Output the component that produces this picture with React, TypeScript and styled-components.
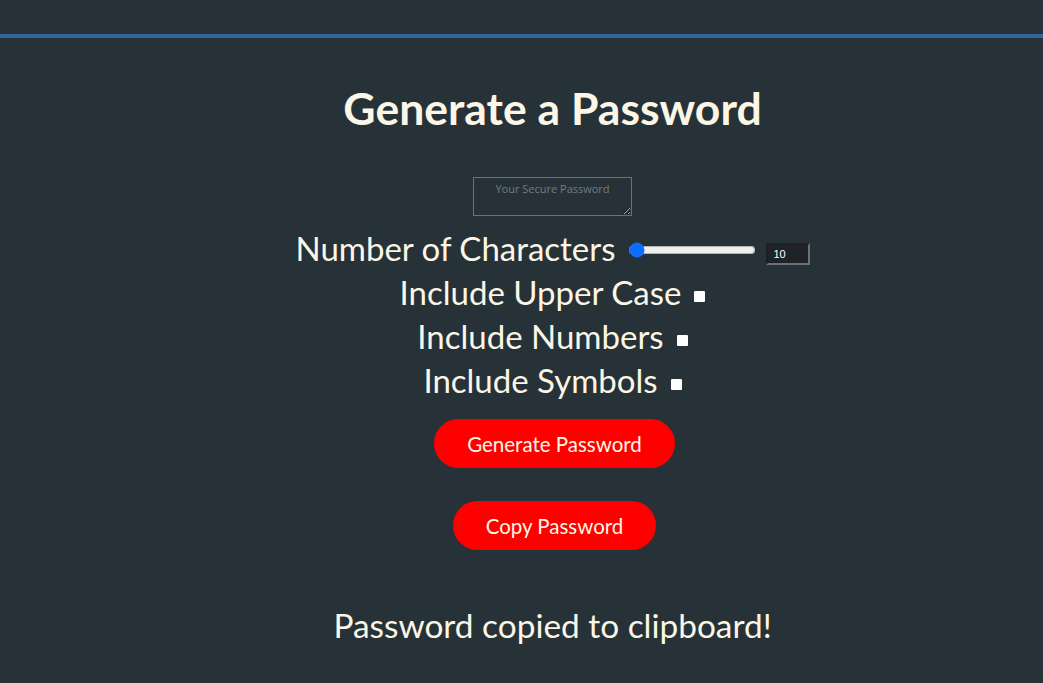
import React from "react";
import styled, { createGlobalStyle } from "styled-components";

const Global = createGlobalStyle`
  html, body { margin: 0; padding: 0; background: #263238; }
  body { font-family: Lato, "Open Sans", sans-serif; color: #fbf6e6; }
`;

const Page = styled.div`
  min-height: 683px;
  background: #263238;
  padding-top: 34px;
  box-sizing: border-box;
`;

const TopBar = styled.div`
  height: 4px;
  background: #2f6599;
`;

const Main = styled.main`
  display: flex;
  flex-direction: column;
  align-items: center;
  padding-left: 62px;
`;

const Title = styled.h1`
  margin: 44px 0 0;
  font-size: 44.5px;
  font-weight: 700;
  line-height: 52px;
  color: #fbf6e6;
`;

const Output = styled.textarea`
  margin-top: 43px;
  width: 159px;
  height: 39px;
  box-sizing: border-box;
  background: transparent;
  border: 1px solid #6c7175;
  color: #fbf6e6;
  font-family: "Open Sans", sans-serif;
  font-size: 11px;
  text-align: center;
  padding: 3px 2px;
  resize: both;
  &::placeholder { color: #777b7d; }
`;

const Rows = styled.div`
  margin-top: 10px;
  display: flex;
  flex-direction: column;
  align-items: center;
`;

const Row = styled.div`
  display: flex;
  align-items: center;
  height: 44px;
  font-size: 33px;
`;

const Label = styled.label`
  white-space: nowrap;
`;

const Range = styled.input`
  width: 128px;
  margin: 4px 10px 0 12px;
  accent-color: #0d6efd;
`;

const NumberBox = styled.input`
  width: 44px;
  height: 22px;
  box-sizing: border-box;
  margin-top: 12px;
  background: #1f2328;
  border: 2px inset #6c7175;
  color: #ffffff;
  font-size: 11px;
  padding: 2px 6px;
`;

const Check = styled.span`
  display: inline-block;
  width: 11px;
  height: 11px;
  background: #fff;
  border-radius: 1px;
  margin: 8px 0 0 13px;
`;

const Button = styled.button<{ $w: number; $mt: number }>`
  width: ${(p) => p.$w}px;
  height: 49px;
  margin-top: ${(p) => p.$mt}px;
  margin-left: 4px;
  border: none;
  border-radius: 25px;
  background: #ff0000;
  color: #fbf6e6;
  font-family: Lato, sans-serif;
  font-size: 20.5px;
`;

const Message = styled.p`
  margin: 55px 0 0;
  font-size: 33.4px;
  line-height: 40px;
`;

export default function App() {
  return (
    <>
      <Global />
      <Page>
        <TopBar />
        <Main>
          <Title>Generate a Password</Title>
          <Output placeholder="Your Secure Password" />
          <Rows>
            <Row>
              <Label>Number of Characters</Label>
              <Range type="range" min={8} max={128} defaultValue={10} />
              <NumberBox type="number" defaultValue={10} />
            </Row>
            <Row>
              <Label>Include Upper Case</Label>
              <Check />
            </Row>
            <Row>
              <Label>Include Numbers</Label>
              <Check />
            </Row>
            <Row>
              <Label>Include Symbols</Label>
              <Check />
            </Row>
          </Rows>
          <Button $w={241} $mt={17}>Generate Password</Button>
          <Button $w={203} $mt={33}>Copy Password</Button>
          <Message>Password copied to clipboard!</Message>
        </Main>
      </Page>
    </>
  );
}
